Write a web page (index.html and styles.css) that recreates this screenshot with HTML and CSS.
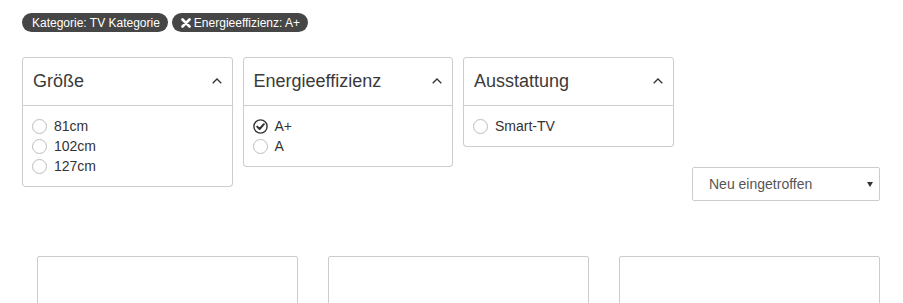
FILE: index.html
```html
<!DOCTYPE html>
<html lang="de">
<head>
<meta charset="utf-8">
<title>Filter</title>
<link rel="stylesheet" href="styles.css">
</head>
<body>
<div class="page">
  <div class="tags">
    <span class="tag">Kategorie: TV Kategorie</span>
    <span class="tag tag-remove"><svg class="tag-x" viewBox="0 0 10 10" width="10" height="10"><path d="M1.5 1.5 L8.5 8.5 M8.5 1.5 L1.5 8.5" stroke="#fff" stroke-width="2.6" stroke-linecap="round"/></svg>Energieeffizienz: A+</span>
  </div>

  <div class="filters">
    <div class="panel">
      <div class="panel-head">
        <span class="panel-title">Größe</span>
        <svg class="chev" viewBox="0 0 10 6" width="10" height="6"><polyline points="0.7,5.3 5,1 9.3,5.3" fill="none" stroke="#333" stroke-width="1.3"/></svg>
      </div>
      <div class="panel-body">
        <div class="opt"><span class="radio"></span>81cm</div>
        <div class="opt"><span class="radio"></span>102cm</div>
        <div class="opt"><span class="radio"></span>127cm</div>
      </div>
    </div>
    <div class="panel">
      <div class="panel-head">
        <span class="panel-title">Energieeffizienz</span>
        <svg class="chev" viewBox="0 0 10 6" width="10" height="6"><polyline points="0.7,5.3 5,1 9.3,5.3" fill="none" stroke="#333" stroke-width="1.3"/></svg>
      </div>
      <div class="panel-body">
        <div class="opt"><svg class="radio-checked" viewBox="0 0 15 15" width="15" height="15"><circle cx="7.5" cy="7.5" r="6.6" fill="none" stroke="#333" stroke-width="1.4"/><path d="M4.2 7.6 L6.6 10 L10.9 5.2" fill="none" stroke="#333" stroke-width="2" stroke-linecap="round" stroke-linejoin="round"/></svg>A+</div>
        <div class="opt"><span class="radio"></span>A</div>
      </div>
    </div>
    <div class="panel">
      <div class="panel-head">
        <span class="panel-title">Ausstattung</span>
        <svg class="chev" viewBox="0 0 10 6" width="10" height="6"><polyline points="0.7,5.3 5,1 9.3,5.3" fill="none" stroke="#333" stroke-width="1.3"/></svg>
      </div>
      <div class="panel-body">
        <div class="opt"><span class="radio"></span>Smart-TV</div>
      </div>
    </div>
  </div>

  <div class="sort-row">
    <div class="select"><span class="select-text">Neu eingetroffen</span><span class="select-arrow"></span></div>
  </div>

  <div class="cards">
    <div class="card"></div>
    <div class="card"></div>
    <div class="card"></div>
  </div>
</div>
</body>
</html>
```
FILE: styles.css
```css
html, body {
  margin: 0;
  padding: 0;
  background: #fff;
}
body {
  font-family: "Liberation Sans", Arial, sans-serif;
  color: #333;
  overflow: hidden;
}
.page {
  width: 903px;
  height: 303px;
  padding: 13px 23px 0 22px;
  box-sizing: border-box;
  overflow: hidden;
}
.tags {
  display: flex;
  gap: 4px;
  height: 19px;
}
.tag {
  display: inline-flex;
  align-items: center;
  height: 19px;
  padding: 0 8px 0 10px;
  background: #464646;
  color: #fff;
  font-size: 12px;
  border-radius: 10px;
  white-space: nowrap;
}
.tag-remove {
  padding-left: 9px;
}
.tag-x {
  margin-right: 3px;
}
.filters {
  display: flex;
  gap: 10px;
  margin-top: 25px;
  height: 49px;
}
.panel {
  position: relative;
  width: 210.5px;
  flex: none;
}
.panel-head {
  box-sizing: border-box;
  height: 49px;
  border: 1px solid #ccc;
  border-radius: 3px 3px 0 0;
  display: flex;
  align-items: center;
  justify-content: space-between;
  padding: 0 10px 0 10px;
}
.panel-title {
  font-size: 18px;
  color: #3a3a3a;
}
.chev {
  display: block;
  margin-top: -2px;
}
.panel-body {
  position: absolute;
  left: 0;
  right: 0;
  top: 49px;
  border: 1px solid #ccc;
  border-top: none;
  border-radius: 0 0 4px 4px;
  padding: 10px 9px;
  background: #fff;
}
.opt {
  display: flex;
  align-items: center;
  height: 20px;
  font-size: 14px;
  color: #333;
}
.radio {
  box-sizing: border-box;
  width: 15px;
  height: 15px;
  border: 1px solid #bdbdbd;
  border-radius: 50%;
  margin-right: 7px;
  flex: none;
}
.radio-checked {
  display: block;
  margin-right: 7px;
  flex: none;
}
.sort-row {
  display: flex;
  justify-content: flex-end;
  margin-top: 61px;
}
.select {
  box-sizing: border-box;
  width: 188px;
  height: 34px;
  border: 1px solid #ccc;
  border-radius: 2px;
  display: flex;
  align-items: center;
  justify-content: space-between;
  padding: 0 6px 0 16px;
  font-size: 14px;
  color: #555;
}
.select-arrow {
  width: 0;
  height: 0;
  border-left: 3px solid transparent;
  border-right: 3px solid transparent;
  border-top: 5px solid #333;
}
.cards {
  display: flex;
  gap: 30px;
  margin-top: 55px;
  padding-left: 15px;
}
.card {
  box-sizing: border-box;
  width: 261px;
  height: 120px;
  flex: none;
  border: 1px solid #ccc;
  border-radius: 2px;
}
```
